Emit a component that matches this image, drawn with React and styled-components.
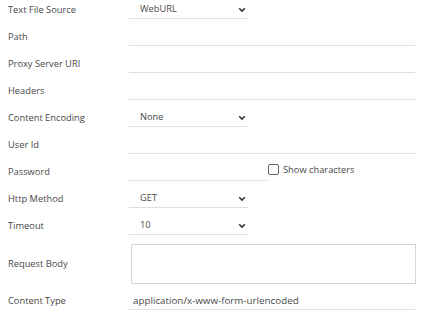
import React from "react";
import styled, { createGlobalStyle } from "styled-components";

const Global = createGlobalStyle`
  html, body { margin: 0; padding: 0; background: #fff; }
  body { font-family: "Open Sans", "Noto Sans", sans-serif; font-size: 9.3px; color: #474747; }
`;

const Form = styled.div`
  display: flex;
  flex-direction: column;
  gap: 8px;
  padding: 0 8px;
  width: 426px;
  box-sizing: border-box;
`;

const Row = styled.div`
  display: grid;
  grid-template-columns: 121px 1fr;
  align-items: ${(p) => (p.$top ? "center" : "start")};
  margin-top: ${(p) => p.$shift || 0}px;
`;

const Label = styled.div`
  height: 19px;
  line-height: 20px;
  color: #474747;
  white-space: nowrap;
`;

const Underlined = styled.div`
  height: 19px;
  line-height: 20px;
  box-sizing: border-box;
  border-bottom: 1px solid #dde0e4;
  width: ${(p) => p.$w || "286px"};
  color: #4a4a4a;
  padding-left: ${(p) => p.$pad || 0}px;
  font-size: ${(p) => p.$fs || "inherit"};
  white-space: nowrap;
`;

const SelectBox = styled(Underlined)`
  display: flex;
  align-items: center;
  justify-content: space-between;
  padding-right: 2px;
`;

const Chevron = styled.svg`
  width: 8px;
  height: 6px;
  margin-top: 1px;
`;

const InlineGroup = styled.div`
  display: flex;
  align-items: center;
`;

const CheckWrap = styled.label`
  display: flex;
  align-items: center;
  gap: 4px;
  margin-left: 1px;
  margin-top: -5px;
  color: #474747;
`;

const Box = styled.span`
  width: 9px;
  height: 9px;
  border: 1px solid #666;
  border-radius: 2px;
  background: #fff;
`;

const TextArea = styled.div`
  margin-top: 1px;
  margin-left: 2px;
  width: 285px;
  height: 40px;
  box-sizing: border-box;
  border: 1px solid #d3d7dc;
`;

const Select = ({ value }) => (
  <SelectBox $w="119px" $pad={11}>
    <span>{value}</span>
    <Chevron viewBox="0 0 8 6">
      <path d="M1.2 1.2 L4 4 L6.8 1.2" fill="none" stroke="#333" strokeWidth="1.6" />
    </Chevron>
  </SelectBox>
);

export default function App() {
  return (
    <>
      <Global />
      <Form>
        <Row>
          <Label>Text File Source</Label>
          <Select value="WebURL" />
        </Row>
        <Row>
          <Label>Path</Label>
          <Underlined />
        </Row>
        <Row>
          <Label>Proxy Server URI</Label>
          <Underlined />
        </Row>
        <Row>
          <Label>Headers</Label>
          <Underlined />
        </Row>
        <Row>
          <Label>Content Encoding</Label>
          <Select value="None" />
        </Row>
        <Row>
          <Label>User Id</Label>
          <Underlined />
        </Row>
        <Row>
          <Label>Password</Label>
          <InlineGroup>
            <Underlined $w="138px" />
            <CheckWrap>
              <Box />
              Show characters
            </CheckWrap>
          </InlineGroup>
        </Row>
        <Row>
          <Label>Http Method</Label>
          <Select value="GET" />
        </Row>
        <Row>
          <Label>Timeout</Label>
          <Select value="10" />
        </Row>
        <Row $top>
          <Label>Request Body</Label>
          <TextArea />
        </Row>
        <Row $shift={-1}>
          <Label>Content Type</Label>
          <Underlined $pad={4} $fs="9.8px">application/x-www-form-urlencoded</Underlined>
        </Row>
      </Form>
    </>
  );
}
